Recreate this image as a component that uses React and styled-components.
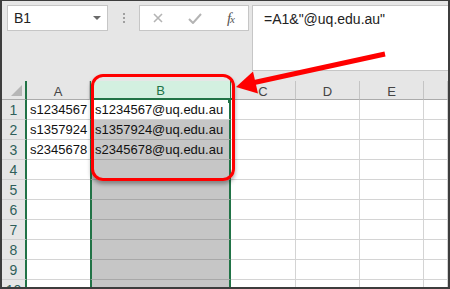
import styled, { createGlobalStyle } from 'styled-components'

//Global reset
const GlobalStyle = createGlobalStyle`
  body {
    margin: 0;
    font-family: "Liberation Sans", Arial, sans-serif;
  }
`;

const COLS = [
  { key: 'A', width: 63 },
  { key: 'B', width: 141, selected: true },
  { key: 'C', width: 65 },
  { key: 'D', width: 64 },
  { key: 'E', width: 64 },
  { key: 'F', width: 0 },
];

const DATA = {
  1: ['s1234567', 's1234567@uq.edu.au'],
  2: ['s1357924', 's1357924@uq.edu.au'],
  3: ['s2345678', 's2345678@uq.edu.au'],
};

const gridTemplate = `25px ${COLS.slice(0, 5).map((c) => c.width + 'px').join(' ')} 1fr`;

//Window frame
const Frame = styled.div`
  position: relative;
  width: 450px;
  height: 289px;
  box-sizing: border-box;
  border: 2px solid #3d3d3d;
  border-top-width: 1px;
  background: #e6e6e6;
  overflow: hidden;
`;

//Formula bar
const TopBar = styled.div`
  display: flex;
  align-items: flex-start;
  height: 69px;
  padding: 4px 0 0 5px;
  box-sizing: border-box;
`;

const NameBox = styled.div`
  display: flex;
  align-items: center;
  justify-content: space-between;
  width: 101px;
  height: 26px;
  box-sizing: border-box;
  padding: 0 6px 0 6px;
  background: #fff;
  border: 1px solid #c6c6c6;
  font-size: 14px;
  color: #222;
`;

const Caret = styled.span`
  width: 0;
  height: 0;
  border-left: 4px solid transparent;
  border-right: 4px solid transparent;
  border-top: 4px solid #6a6a6a;
`;

const Dots = styled.div`
  display: flex;
  flex-direction: column;
  gap: 2px;
  width: 2px;
  margin: 8px 14px 0 15px;
  span {
    width: 2px;
    height: 2px;
    background: #a0a0a0;
  }
`;

const ButtonGroup = styled.div`
  display: flex;
  align-items: center;
  justify-content: space-between;
  width: 110px;
  height: 26px;
  box-sizing: border-box;
  padding: 0 14px 0 13px;
  background: #fff;
  border: 1px solid #c6c6c6;
`;

const Fx = styled.span`
  font-family: "Liberation Serif", serif;
  font-style: italic;
  font-size: 15px;
  color: #555;
  letter-spacing: -1px;
  small {
    font-size: 11px;
  }
`;

const FormulaInput = styled.div`
  flex: 1;
  height: 66px;
  margin-left: 3px;
  box-sizing: border-box;
  padding: 5px 11px;
  background: #fff;
  border: 1px solid #c6c6c6;
  border-right: none;
  font-size: 14px;
  color: #222;
`;

//Sheet grid
const Sheet = styled.div`
  display: grid;
  grid-template-columns: ${gridTemplate};
  grid-auto-rows: 20px;
  grid-template-rows: 19px;
  margin-top: 11px;
  font-size: 13px;
`;

const Corner = styled.div`
  display: flex;
  align-items: flex-end;
  justify-content: flex-end;
  padding: 0 3px 3px 0;
  border-bottom: 1px solid #ababab;
  border-right: 2px solid #217346;
  box-sizing: border-box;
`;

const ColHeader = styled.div`
  display: flex;
  align-items: center;
  justify-content: center;
  box-sizing: border-box;
  background: ${(p) => (p.$selected ? '#d3f0e0' : '#e6e6e6')};
  color: ${(p) => (p.$selected ? '#217346' : '#444')};
  border-right: 1px solid ${(p) => (p.$selected ? '#217346' : '#c4c4c4')};
  border-left: ${(p) => (p.$selected ? '1px solid #217346' : 'none')};
  border-bottom: ${(p) => (p.$selected ? '2px solid #217346' : '1px solid #ababab')};
  padding-top: 2px;
`;

const RowHeader = styled.div`
  display: flex;
  align-items: center;
  justify-content: center;
  box-sizing: border-box;
  background: #e6e6e6;
  color: #2f5f5a;
  border-bottom: 1px solid #d0d0d0;
  border-right: 2px solid #217346;
  font-size: 14px;
`;

const Cell = styled.div`
  position: relative;
  display: flex;
  align-items: center;
  box-sizing: border-box;
  padding: 0 3px;
  white-space: nowrap;
  color: #111;
  background: ${(p) => (p.$selected ? (p.$active ? '#fff' : '#c6c6c6') : '#fff')};
  border-bottom: 1px solid ${(p) => (p.$selected && !p.$active ? '#a8a8a8' : '#d4d4d4')};
  border-right: ${(p) => (p.$selected ? '2px solid #217346' : p.$first ? 'none' : '1px solid #d4d4d4')};
  border-left: ${(p) => (p.$selected ? '2px solid #217346' : 'none')};
`;

const FillHandle = styled.span`
  position: absolute;
  right: -3px;
  top: -2px;
  width: 4px;
  height: 5px;
  background: #217346;
`;

//Annotations drawn on top
const Highlight = styled.div`
  position: absolute;
  left: 89px;
  top: 73px;
  width: 144px;
  height: 107px;
  box-sizing: border-box;
  border: 3.5px solid #ff0000;
  border-radius: 12px;
  box-shadow: 0 3px 4px rgba(0, 0, 0, 0.35);
  pointer-events: none;
`;

const ArrowLayer = styled.svg`
  position: absolute;
  left: -2px;
  top: -1px;
  pointer-events: none;
`;

function Check() {
  return (
    <svg width="14" height="11" viewBox="0 0 14 11">
      <path d="M1 6 L5 10 L13 1" fill="none" stroke="#b4b4b4" strokeWidth="2" />
    </svg>
  );
}

function Cross() {
  return (
    <svg width="10" height="10" viewBox="0 0 10 10">
      <path d="M1 1 L9 9 M9 1 L1 9" fill="none" stroke="#b4b4b4" strokeWidth="1.6" />
    </svg>
  );
}

export default function App() {
  const rows = Array.from({ length: 10 }, (_, i) => i + 1);
  return (
    <Frame>
      <GlobalStyle />
      <TopBar>
        <NameBox>
          B1
          <Caret />
        </NameBox>
        <Dots>
          <span />
          <span />
          <span />
        </Dots>
        <ButtonGroup>
          <Cross />
          <Check />
          <Fx>
            f<small>x</small>
          </Fx>
        </ButtonGroup>
        <FormulaInput>=A1&amp;"@uq.edu.au"</FormulaInput>
      </TopBar>

      <Sheet>
        <Corner>
          <svg width="11" height="11" viewBox="0 0 11 11">
            <polygon points="11,0 11,11 0,11" fill="#b6b6b6" />
          </svg>
        </Corner>
        {COLS.map((c) => (
          <ColHeader key={c.key} $selected={c.selected}>
            {c.key === 'F' ? '' : c.key}
          </ColHeader>
        ))}
        {rows.map((r) => [
          <RowHeader key={'h' + r}>{r}</RowHeader>,
          ...COLS.map((c, ci) => (
            <Cell
              key={c.key + r}
              $selected={c.selected}
              $active={c.selected && r === 1}
              $first={ci === 0}
            >
              {DATA[r] && ci < 2 ? DATA[r][ci] : ''}
              {c.selected && r === 1 && <FillHandle />}
            </Cell>
          )),
        ])}
      </Sheet>

      <Highlight />
      <ArrowLayer width="450" height="289">
        <line x1="385" y1="54" x2="252" y2="83" stroke="#ff0000" strokeWidth="5" />
        <polygon points="236,87 258,93.5 253,71.5" fill="#ff0000" />
      </ArrowLayer>
    </Frame>
  );
}
